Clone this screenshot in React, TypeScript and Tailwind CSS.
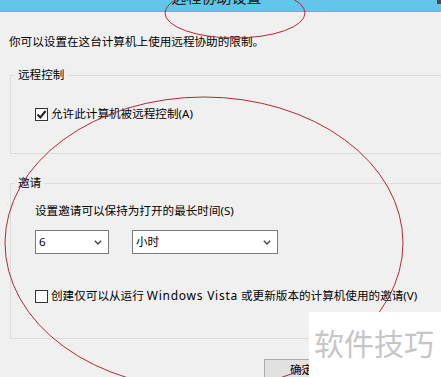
import type { ReactNode } from 'react'

const font = { fontFamily: '"Noto Sans", "Noto Sans CJK SC", sans-serif' }

function CheckBox({ checked }: { checked?: boolean }) {
  return (
    <span className="flex h-[13px] w-[13px] shrink-0 items-center justify-center border border-[#333333] bg-white">
      {checked && (
        <svg width="11" height="11" viewBox="0 0 11 11">
          <path d="M1.5 5.5 L4.3 8.4 L9.6 2" fill="none" stroke="#222" strokeWidth="2" />
        </svg>
      )}
    </span>
  )
}

function Chevron() {
  return (
    <svg width="8" height="5" viewBox="0 0 8 5">
      <path d="M0.8 0.8 L4 4 L7.2 0.8" fill="none" stroke="#444" strokeWidth="1.4" />
    </svg>
  )
}

function Select({ value, width }: { value: string; width: string }) {
  return (
    <div className={`flex h-[24px] items-center justify-between border border-[#7a7a7a] bg-white pl-[3px] pr-[6px] ${width}`}>
      <span className="text-[11.6px] leading-[16px] text-black">{value}</span>
      <Chevron />
    </div>
  )
}

function Group({ title, children, className }: { title: string; children: ReactNode; className: string }) {
  return (
    <fieldset className={`ml-[10px] w-[450px] border border-[#dcdcdc] ${className}`}>
      <legend className="ml-[4px] px-[3px] text-[11.6px] leading-[16px] text-black">{title}</legend>
      <div className="pl-[24px]">{children}</div>
    </fieldset>
  )
}

export default function App() {
  return (
    <div className="relative h-[377px] w-[441px] overflow-hidden bg-[#f0f0f0]" style={font}>
      <div className="relative flex h-[12px] justify-center border-b border-[#58b6d8] bg-[#62c6eb]">
        <span className="-mt-[13px] ml-[-8px] h-[20px] shrink-0 text-[15px] leading-[20px] text-[#1a1a1a]">远程协助设置</span>
        <div className="absolute right-0 top-0 h-[4px] w-[4px] bg-[#4a4a4a]" />
      </div>

      <p className="mt-[22px] pl-[9px] text-[11.6px] leading-[16px] text-black">
        你可以设置在这台计算机上使用远程协助的限制。
      </p>

      <Group title="远程控制" className="mt-[17px] pb-[31px]">
        <label className="mt-[23px] flex h-[16px] items-center gap-[3px] text-[11.6px] leading-[16px] text-black">
          <CheckBox checked />
          允许此计算机被远程控制(A)
        </label>
      </Group>

      <Group title="邀请" className="mt-[21px] pb-[34px]">
        <p className="mt-[12px] text-[11.6px] leading-[16px] text-black">设置邀请可以保持为打开的最长时间(S)</p>
        <div className="mt-[11px] flex gap-[23px]">
          <Select value="6" width="w-[74px]" />
          <Select value="小时" width="w-[146px]" />
        </div>
        <label className="mt-[34px] flex h-[16px] items-center gap-[3px] whitespace-nowrap text-[11.6px] leading-[16px] text-black">
          <CheckBox />
          <span>
            创建仅可以从运行 <span className="text-[12px] tracking-[0.75px]">Windows Vista</span> 或更新版本的计算机使用的邀请(V)
          </span>
        </label>
      </Group>

      <div className="mt-[17px] pl-[264px]">
        <button className="h-[23px] w-[75px] border border-[#adadad] bg-[#e1e1e1] text-[11.6px] leading-[16px] text-black">
          确定
        </button>
      </div>

      <svg className="pointer-events-none absolute left-0 top-0" width="441" height="377" viewBox="0 0 441 377">
        <ellipse cx="235" cy="13" rx="70" ry="25" fill="none" stroke="#b3283a" strokeWidth="1" />
        <ellipse cx="204" cy="243" rx="199" ry="146" fill="none" stroke="#b3283a" strokeWidth="1" />
      </svg>

      <div className="absolute bottom-0 right-0 flex h-[65px] w-[132px] items-start bg-white pl-[5px] pt-[12px]">
        <span className="text-[30px] leading-[36px] text-[#c6c6c6]" style={{ fontFamily: '"Noto Sans CJK SC", sans-serif' }}>
          软件技巧
        </span>
      </div>
    </div>
  )
}
